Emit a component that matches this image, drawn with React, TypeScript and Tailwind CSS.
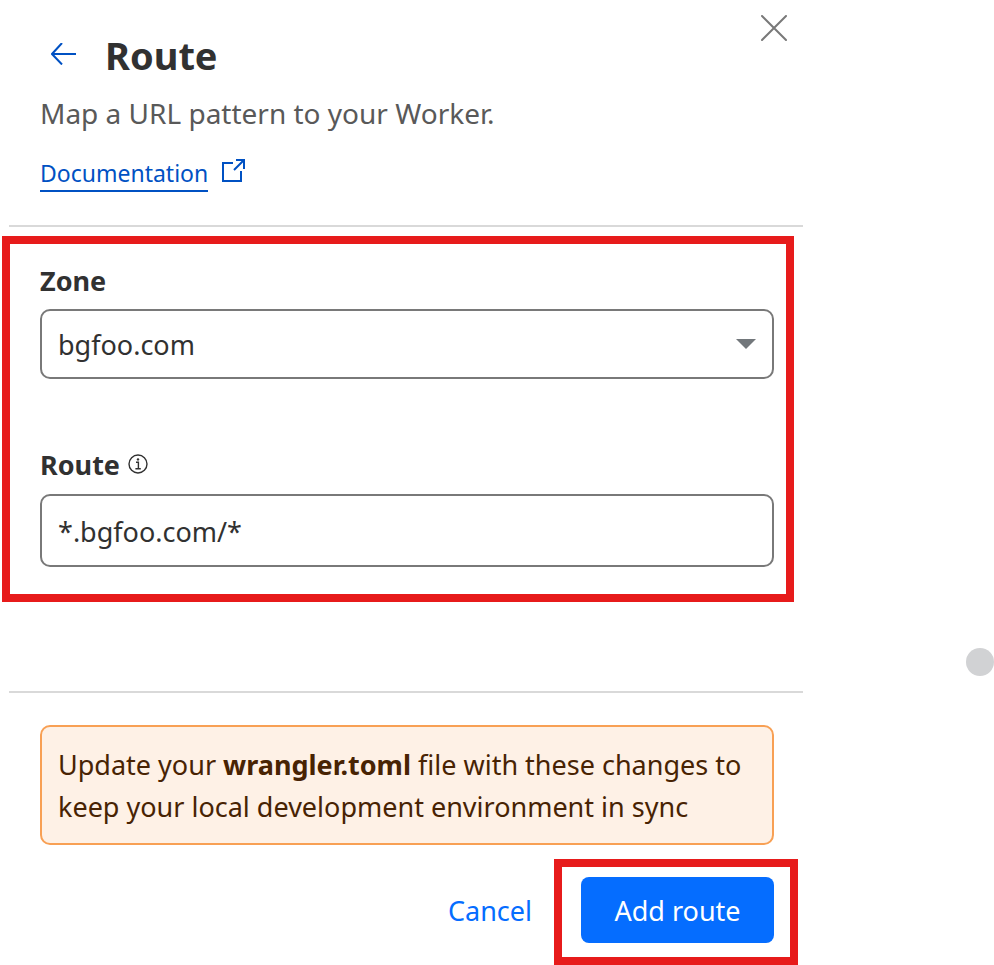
import { useState } from 'react';
import type { ReactNode } from 'react';

// Icons

const ArrowLeftIcon = () => (
  <svg width="26" height="22" viewBox="0 0 26 22" fill="none" stroke="currentColor" strokeWidth="2" aria-hidden="true">
    <path d="M25 11H1M11 0 1 11l10 10.5" />
  </svg>
);

const CloseIcon = () => (
  <svg width="26" height="26" viewBox="0 0 26 26" fill="none" stroke="currentColor" strokeWidth="2" strokeLinecap="round" aria-hidden="true">
    <path d="M1 1l24 24M25 1 1 25" />
  </svg>
);

const ExternalLinkIcon = () => (
  <svg width="24" height="24" viewBox="0 0 24 24" fill="none" stroke="currentColor" strokeWidth="2" aria-hidden="true">
    <path d="M11 4H1v18h18V12" />
    <path d="M14 1h8v9M22 1 12 11" />
  </svg>
);

const InfoIcon = () => (
  <svg width="20" height="20" viewBox="0 0 20 20" fill="none" stroke="currentColor" aria-hidden="true">
    <circle cx="10" cy="10" r="9" strokeWidth="1.4" />
    <path d="M8 8.3h2.4v6.2M7.4 14.8h5.4" strokeWidth="1.4" />
    <circle cx="10" cy="5.4" r="1.2" fill="currentColor" stroke="none" />
  </svg>
);

const CaretIcon = () => (
  <svg width="20" height="10" viewBox="0 0 20 10" fill="currentColor" aria-hidden="true">
    <path d="M0 0h20L10 10z" />
  </svg>
);

// Red frame around the parts the guide points at
function Highlight({ className, children }: { className: string; children: ReactNode }) {
  return <div className={`border-8 border-[#e71b1b] ${className}`}>{children}</div>;
}

export default function App() {
  const [zone, setZone] = useState('bgfoo.com');
  const [route, setRoute] = useState('*.bgfoo.com/*');

  return (
    <div className="relative min-h-screen bg-white font-['Noto_Sans','Open_Sans',sans-serif] text-[27px] leading-10 text-[#313131]">
      <main className="w-full max-w-[803px]">
        {/* Header */}
        <header className="flex items-start justify-between pr-4 pl-10">
          <div className="pt-[31px]">
            <div className="flex items-start gap-7 pl-[11px]">
              <button type="button" aria-label="Back" className="pt-3 text-[#0051c3]">
                <ArrowLeftIcon />
              </button>
              <h1 className="text-[38px] leading-12 font-bold">Route</h1>
            </div>
            <p className="mt-[14px] text-[28px] text-[#595959]">Map a URL pattern to your Worker.</p>
            <a href="#documentation" className="mt-[23px] flex items-center gap-[14px] text-[23px] text-[#0051c3]">
              <span className="border-b-2 border-[#0051c3] leading-[34px]">Documentation</span>
              <span className="pb-1.5">
                <ExternalLinkIcon />
              </span>
            </a>
          </div>
          <button type="button" aria-label="Close" className="mt-[15px] text-[#797979]">
            <CloseIcon />
          </button>
        </header>

        <hr className="mt-[33px] ml-[9px] border-t-2 border-[#d9d9d9]" />

        {/* Form */}
        <Highlight className="mt-[9px] mr-[9px] ml-0.5 pt-[17px] pr-3 pb-[27px] pl-[30px]">
          <label htmlFor="zone" className="block font-bold">Zone</label>
          <div className="relative mt-2">
            <select
              id="zone"
              value={zone}
              onChange={(e) => setZone(e.target.value)}
              className="block h-[70px] w-full appearance-none rounded-[10px] border-2 border-[#797979] bg-white px-4 pt-0.5"
            >
              <option>bgfoo.com</option>
            </select>
            <span className="pointer-events-none absolute inset-y-0 right-[18px] flex items-center text-[#72777b]">
              <CaretIcon />
            </span>
          </div>

          <div className="mt-[66px] flex items-center gap-2">
            <label htmlFor="route" className="font-bold">Route</label>
            <button type="button" aria-label="About routes" className="pb-0.5">
              <InfoIcon />
            </button>
          </div>
          <input
            id="route"
            type="text"
            value={route}
            onChange={(e) => setRoute(e.target.value)}
            className="mt-[9px] block h-[73px] w-full rounded-[10px] border-2 border-[#797979] px-4 pt-0.5"
          />
        </Highlight>

        <hr className="mt-[89px] ml-[9px] border-t-2 border-[#d9d9d9]" />

        {/* Notice */}
        <p className="mt-8 mr-[29px] ml-10 rounded-[10px] border-2 border-[#f8a054] bg-[#fef1e6] px-4 pt-[17px] pb-[15px] leading-[42px] text-[#482303]">
          Update your <strong className="font-bold">wrangler.toml</strong> file with these changes to keep your local
          development environment in sync
        </p>

        {/* Actions */}
        <footer className="mt-[14px] mr-[5px] flex items-center justify-end gap-[22px]">
          <button type="button" className="pb-0.5 text-[#056dff]">Cancel</button>
          <Highlight className="pt-[10px] pr-4 pb-[14px] pl-[19px]">
            <button type="button" className="block h-[66px] w-[193px] rounded-lg bg-[#056dff] pt-0.5 text-white">
              Add route
            </button>
          </Highlight>
        </footer>
      </main>

      {/* Floating handle on the window edge */}
      <div className="absolute top-[648px] right-0 size-7 rounded-full bg-[#d1d2d4]" />
    </div>
  );
}
